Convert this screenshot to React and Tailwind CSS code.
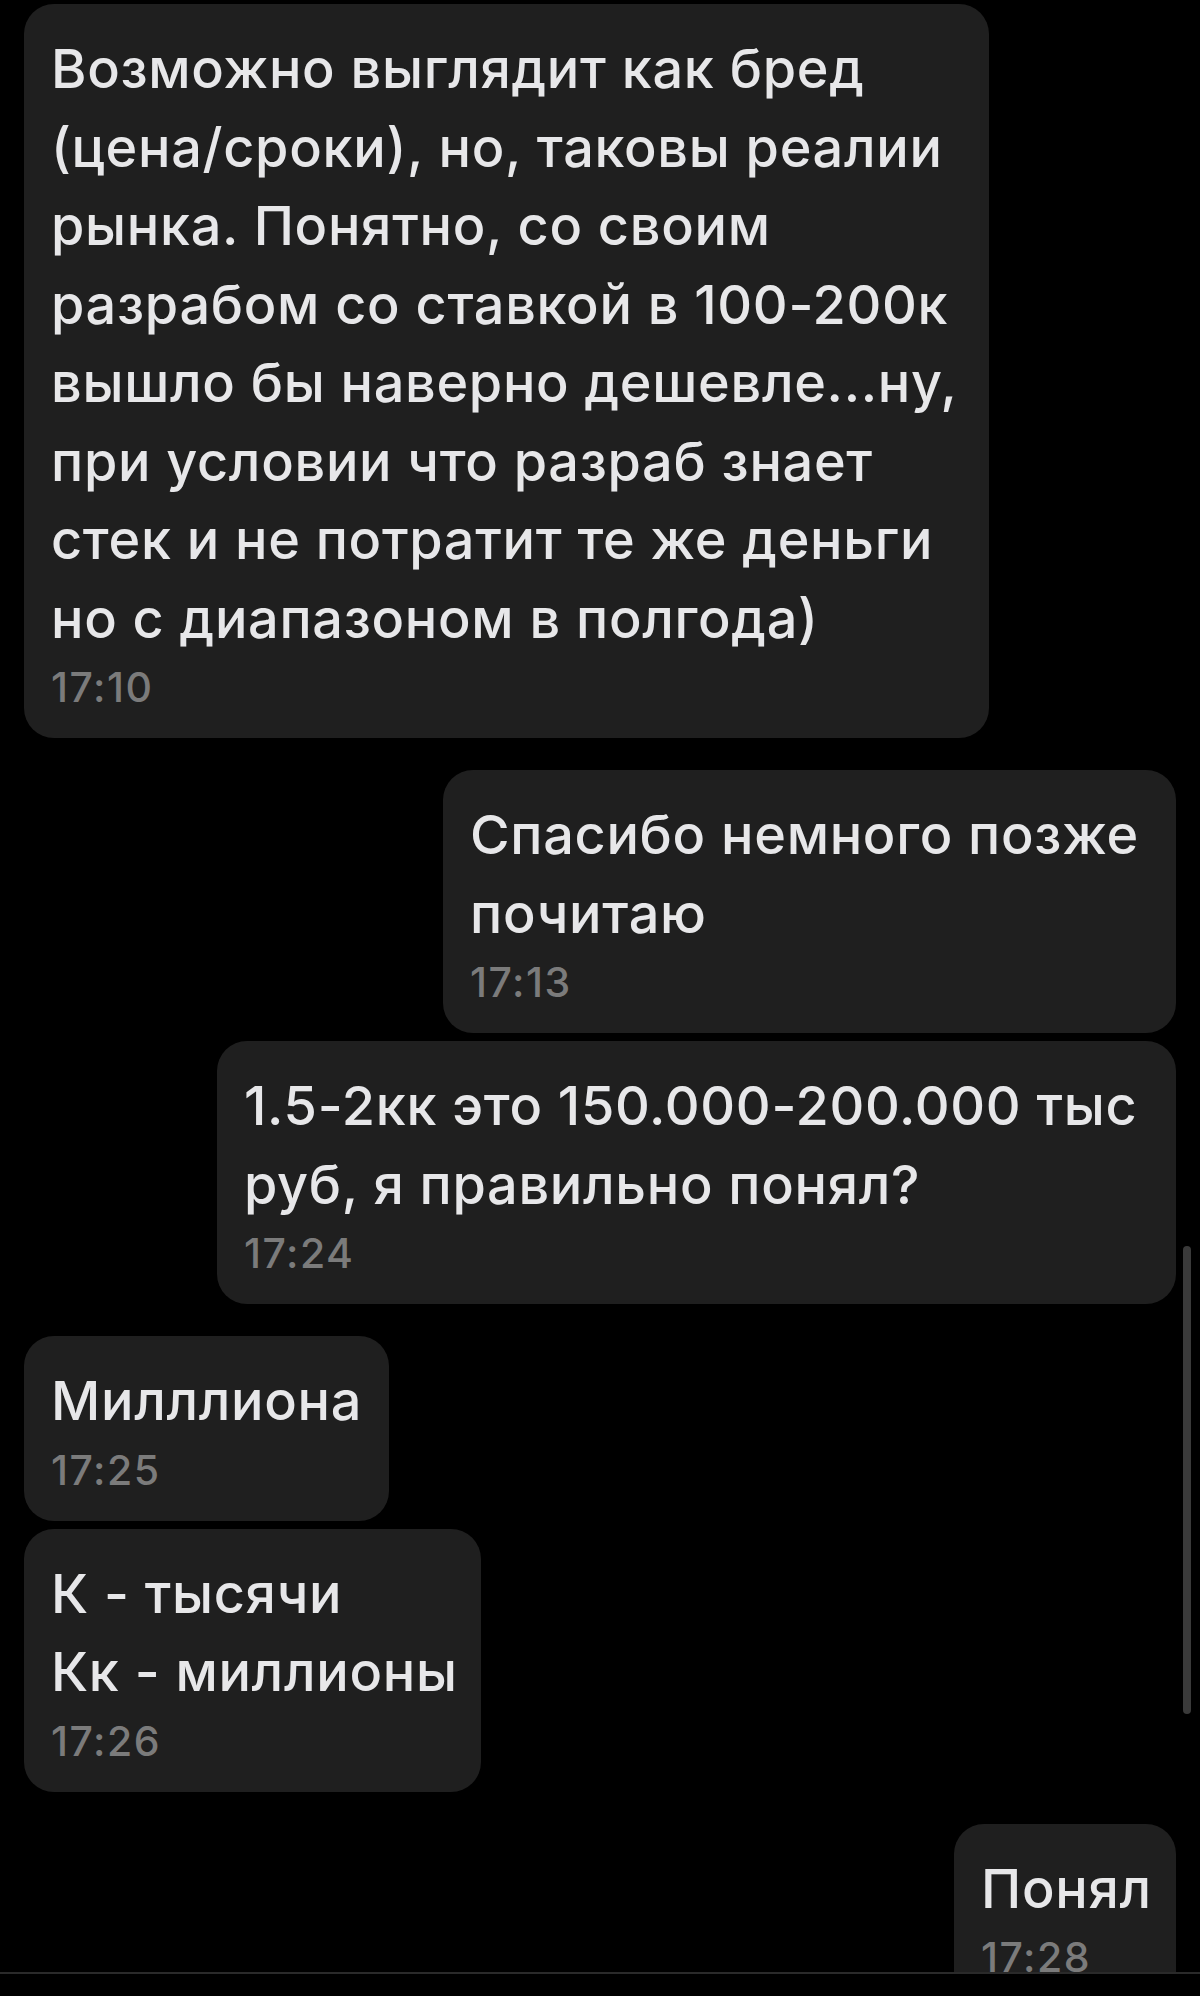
const MESSAGES = [
  {
    id: 1,
    out: false,
    width: 'w-[965px]',
    lines: [
      'Возможно выглядит как бред',
      '(цена/сроки), но, таковы реалии',
      'рынка. Понятно, со своим',
      'разрабом со ставкой в 100-200к',
      'вышло бы наверно дешевле...ну,',
      'при условии что разраб знает',
      'стек и не потратит те же деньги',
      'но с диапазоном в полгода)',
    ],
    time: '17:10',
  },
  { id: 2, out: true, width: 'w-[733px]', gap: 'mt-8', lines: ['Спасибо немного позже', 'почитаю'], time: '17:13' },
  { id: 3, out: true, width: 'w-[959px]', gap: 'mt-2', lines: ['1.5-2кк это 150.000-200.000 тыс', 'руб, я правильно понял?'], time: '17:24' },
  { id: 4, out: false, width: 'w-[365px]', gap: 'mt-8', lines: ['Милллиона'], time: '17:25' },
  { id: 5, out: false, width: 'w-[457px]', gap: 'mt-2', lines: ['К - тысячи', 'Кк - миллионы'], time: '17:26' },
  { id: 6, out: true, width: 'w-[222px]', gap: 'mt-8', lines: ['Понял'], time: '17:28' },
]

function Bubble({ msg }) {
  return (
    <div className={['flex', msg.out ? 'justify-end' : 'justify-start', msg.gap ?? ''].join(' ')}>
      <div className={['shrink-0 rounded-[30px] bg-[#1f1f1f] px-[27px] pt-[26px] pb-[22px]', msg.width].join(' ')}>
        {msg.lines.map((line) => (
          <div key={line} className="whitespace-nowrap text-[54px] leading-[78.5px] font-medium tracking-[0.7px] text-[#e7e7e9]">
            {line}
          </div>
        ))}
        <div className="text-[41px] leading-[58px] font-medium tracking-[1.5px] text-[#7b7b7b]">{msg.time}</div>
      </div>
    </div>
  )
}

export default function App() {
  return (
    <div className="h-[1996px] w-[1200px] overflow-hidden bg-black font-['Inter','Noto_Sans',sans-serif]">
      <div className="relative h-[1972px] overflow-hidden">
        <div className="flex flex-col px-6 pt-1">
          {MESSAGES.map((msg) => (
            <Bubble key={msg.id} msg={msg} />
          ))}
        </div>
        <div className="absolute top-[1246px] left-[1183px] h-[468px] w-[8px] rounded-full bg-[#3a3a3a]" />
      </div>
      <div className="h-[2px] bg-[#2a2a2a]" />
    </div>
  )
}
